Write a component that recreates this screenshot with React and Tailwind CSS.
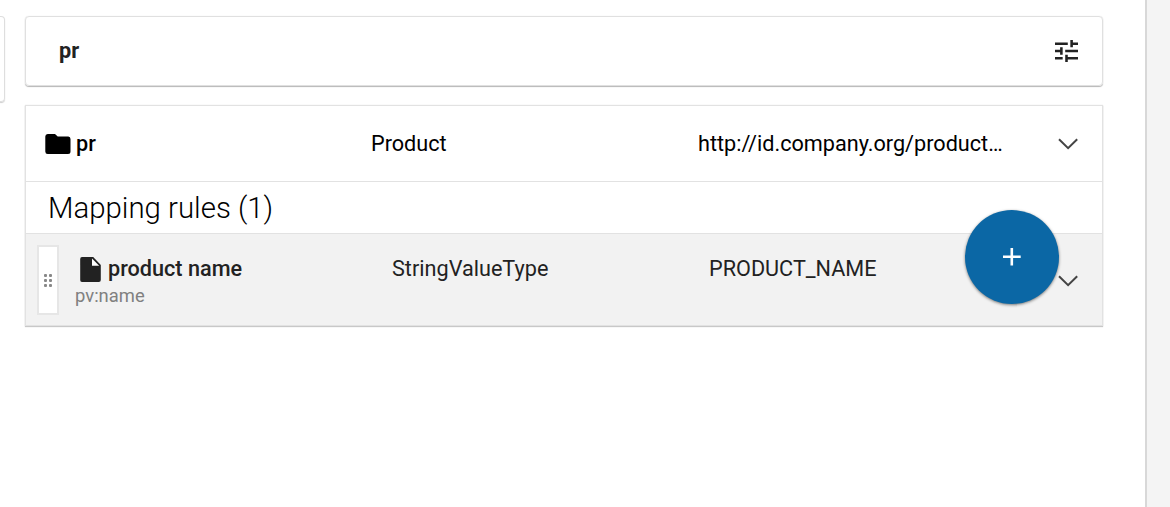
import React from "react";

function Chevron() {
  return (
    <svg className="block h-[12px] w-[20px] shrink-0" viewBox="0 0 20 12" fill="none" stroke="#444" strokeWidth="2">
      <path d="M1 1.2 L10.1 10.2 L19.2 1.2" />
    </svg>
  );
}

function FolderIcon() {
  return (
    <svg className="block h-[20px] w-[26px] shrink-0" viewBox="0 0 26 20" fill="#000">
      <path d="M2.5 0 H10 L12.7 2.5 H23.3 Q25.5 2.5 25.5 5 V17.5 Q25.5 20 23 20 H2.7 Q0.3 20 0.3 17.5 V2.5 Q0.3 0 2.7 0 Z" />
    </svg>
  );
}

function FileIcon() {
  return (
    <svg className="block h-[25px] w-[21px] shrink-0" viewBox="0 0 21 25">
      <path fill="#222" d="M2 0 H13.2 L20.8 8 V23 Q20.8 25 18.8 25 H2 Q0.2 25 0.2 23 V2 Q0.2 0 2 0 Z" />
      <path fill="#fff" d="M12 1.6 V8.8 H19.2 Z" />
    </svg>
  );
}

function TuneIcon() {
  return (
    <svg className="block h-[22px] w-[23px] shrink-0" viewBox="3 3 18 18" preserveAspectRatio="none" fill="#222">
      <path d="M3 17v2h6v-2H3zM3 5v2h10V5H3zm10 16v-2h8v-2h-8v-2h-2v6h2zM7 9v2H3v2h4v2h2V9H7zm14 4v-2H11v2h10zm-6-4h2V7h4V5h-4V3h-2v6z" />
    </svg>
  );
}

function DragHandle() {
  return (
    <div className="ml-[11px] mt-[11px] flex h-[70px] w-[22px] shrink-0 items-center justify-center border-2 border-[#e6e6e6] bg-white">
      <div className="mt-px grid grid-cols-2 gap-[2px]">
        {[0, 1, 2, 3, 4, 5].map((i) => (
          <span key={i} className="h-[3px] w-[3px] rounded-[1px] bg-[#888]" />
        ))}
      </div>
    </div>
  );
}

export default function App() {
  return (
    <div className="relative flex h-[507px] w-[1170px] overflow-hidden bg-white font-['Roboto',sans-serif] text-[21.65px] leading-[30px] text-black">
      <div className="mt-[16px] h-[86px] w-[5px] shrink-0 rounded-r-[4px] border-y border-r border-[#dedede] shadow-[0_1px_1px_rgba(0,0,0,0.2)]" />
      <main className="ml-[20px] mt-[16px] w-[1078px] shrink-0">
        <header className="flex h-[70px] items-center justify-between rounded-[4px] border border-[#e0e0e0] pl-[33px] pr-[24px] shadow-[0_1px_1px_rgba(0,0,0,0.28),0_0_1px_rgba(0,0,0,0.15)]">
          <h1 className="font-bold text-[#222]">pr</h1>
          <div className="-mt-px">
            <TuneIcon />
          </div>
        </header>
        <section className="mt-[19px] border border-[#e2e2e2] shadow-[0_1px_1px_rgba(0,0,0,0.2),0_0_1px_rgba(0,0,0,0.12)]">
          <div className="flex h-[76px] items-center border-b border-[#e2e2e2] pl-[19px] pr-[24px]">
            <div className="flex w-[326px] items-center gap-[5px]">
              <FolderIcon />
              <span className="font-medium">pr</span>
            </div>
            <div className="w-[327px]">Product</div>
            <div className="mr-auto whitespace-nowrap">http://id.company.org/product…</div>
            <div className="mt-px">
              <Chevron />
            </div>
          </div>
          <h2 className="flex h-[52px] items-center border-b border-[#e2e2e2] pl-[22px] text-[29.4px] font-light">Mapping rules (1)</h2>
          <div className="flex h-[91px] bg-[#f2f2f2] pr-[24px] text-[#222]">
            <DragHandle />
            <div className="ml-[16px] mt-[20px] w-[317px]">
              <div className="flex items-center gap-[7px] pl-[5px]">
                <FileIcon />
                <span className="font-medium">product name</span>
              </div>
              <div className="text-[18.4px] leading-[24px] text-[#808080]">pv:name</div>
            </div>
            <div className="mt-[20px] w-[317px]">StringValueType</div>
            <div className="mr-auto mt-[20px]">PRODUCT_NAME</div>
            <div className="mt-[41px]">
              <Chevron />
            </div>
          </div>
        </section>
      </main>
      <aside className="ml-auto w-[25px] shrink-0 border-l-2 border-[#d8d8d8] bg-[#f4f4f4]" />
      <button aria-label="Add" className="absolute left-[965px] top-[210px] flex h-[93.5px] w-[94px] items-center justify-center rounded-full bg-[#0b67a5] shadow-[0_1px_3px_rgba(0,0,0,0.5)]">
        <svg className="h-[18px] w-[18px]" viewBox="0 0 18 18" fill="#fff">
          <path d="M7.5 0h2.6v7.5h7.6v2.6h-7.6v7.5h-2.6v-7.5h-7.5v-2.6h7.5z" />
        </svg>
      </button>
    </div>
  );
}
